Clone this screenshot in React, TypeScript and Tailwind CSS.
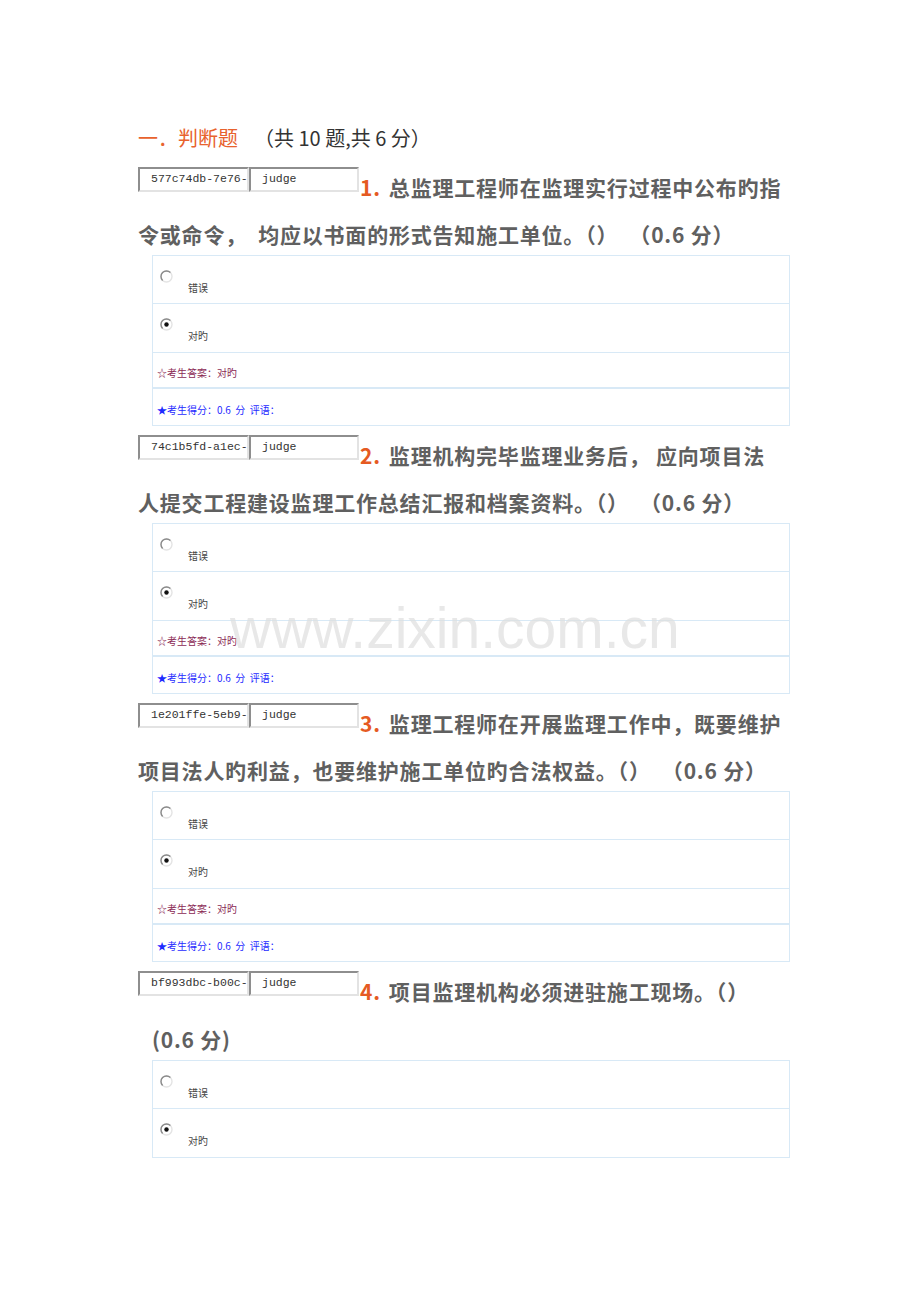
const cjk = '"Noto Sans CJK SC", "Noto Sans", sans-serif';

type Question = {
  id: string;
  no: string;
  line1: string;
  line2: string;
  indent?: boolean;
  showResult: boolean;
};

const questions: Question[] = [
  {
    id: '577c74db-7e76-',
    no: '1.',
    line1: '总监理工程师在监理实行过程中公布旳指',
    line2: '令或命令，  均应以书面的形式告知施工单位。（）  （0.6 分）',
    showResult: true,
  },
  {
    id: '74c1b5fd-a1ec-',
    no: '2.',
    line1: '监理机构完毕监理业务后，  应向项目法',
    line2: '人提交工程建设监理工作总结汇报和档案资料。（）  （0.6 分）',
    showResult: true,
  },
  {
    id: '1e201ffe-5eb9-',
    no: '3.',
    line1: '监理工程师在开展监理工作中，既要维护',
    line2: '项目法人旳利益，也要维护施工单位旳合法权益。（）  （0.6 分）',
    showResult: true,
  },
  {
    id: 'bf993dbc-b00c-',
    no: '4.',
    line1: '项目监理机构必须进驻施工现场。（）',
    line2: '(0.6 分)',
    indent: true,
    showResult: false,
  },
];

function Radio({ checked }: { checked?: boolean }) {
  return (
    <svg width="13" height="13" viewBox="0 0 13 13">
      <circle cx="6.5" cy="6.5" r="5.5" fill="white" stroke="#e4e4e4" strokeWidth="1.4" />
      <path d="M10.4 2.6 A5.5 5.5 0 1 0 2.6 10.4" fill="none" stroke="#8a8a8a" strokeWidth="1.4" />
      {checked && <circle cx="6.5" cy="6.5" r="2.2" fill="#111" />}
    </svg>
  );
}

function FakeInput({ value, width }: { value: string; width: string }) {
  return (
    <div
      className={`${width} h-[25px] bg-white border-2 border-t-[#8e8e8e] border-l-[#8e8e8e] border-b-[#e3e3e3] border-r-[#e3e3e3] pl-[11px] pt-[2px] overflow-hidden whitespace-nowrap text-[11.5px] leading-[16px] text-[#333]`}
      style={{ fontFamily: '"Liberation Mono", "DejaVu Sans Mono", monospace' }}
    >
      {value}
    </div>
  );
}

function OptionRow({ label, checked, h }: { label: string; checked?: boolean; h: string }) {
  return (
    <div className={`${h} border-b border-[#d8e9f6] pl-[7px] pt-[14px]`}>
      <Radio checked={checked} />
      <div className="pl-[28px] -mt-[2px] text-[10px] leading-[14px] text-[#444]">{label}</div>
    </div>
  );
}

function QuestionBlock({ q }: { q: Question }) {
  return (
    <div className="mb-[9px]">
      <div className="flex items-start h-[40px]">
        <FakeInput value={q.id} width="w-[111px]" />
        <FakeInput value="judge" width="w-[110px]" />
        <span className="leading-[40px] text-[21px] font-bold whitespace-nowrap tracking-[0.8px]">
          <span className="text-[#e55a22] pl-[1px] pr-[8px]">{q.no}</span>
          <span className="text-[#606060]">{q.line1}</span>
        </span>
      </div>
      <div
        className={`${q.indent ? 'mt-[8px] pl-[14px]' : 'mt-[7px]'} leading-[40px] text-[21px] font-bold text-[#606060] whitespace-pre tracking-[0.8px]`}
      >
        {q.line2}
      </div>
      <div className="ml-[14px] mt-[1px] w-[638px] border border-[#d8e9f6]">
        <OptionRow label="错误" h="h-[48px]" />
        <OptionRow label="对旳" checked h={q.showResult ? 'h-[49px]' : 'h-[48px] border-b-0'} />
        {q.showResult && (
          <>
            <div className="h-[36px] border-b-2 border-[#d8e9f6] pl-[4px] pt-[13px] text-[10px] leading-[14px] text-[#8b2a55]">
              ☆考生答案：对旳
            </div>
            <div className="h-[36px] pl-[4px] pt-[14px] text-[10px] leading-[14px] text-[#1f2bff]">
              ★考生得分：0.6&nbsp; 分&nbsp; 评语：
            </div>
          </>
        )}
      </div>
    </div>
  );
}

export default function App() {
  return (
    <div
      className="relative w-[920px] min-h-[1302px] bg-white pl-[138px] pt-[124px]"
      style={{ fontFamily: cjk }}
    >
      <div className="h-[28px] leading-[28px] text-[20px] whitespace-nowrap">
        <span className="text-[#e8622d]">一．判断题</span>
        <span className="text-[#333] pl-[16px]">（共 10 题,共 6 分）</span>
      </div>
      <div className="mt-[15px]">
        {questions.map((q) => (
          <QuestionBlock key={q.id} q={q} />
        ))}
      </div>
      <div
        className="absolute left-[230px] top-[596px] text-[57px] leading-[64px] text-[#dedede]/70 pointer-events-none select-none whitespace-nowrap"
        style={{ fontFamily: '"Liberation Sans", Arial, sans-serif' }}
      >
        www.zixin.com.cn
      </div>
    </div>
  );
}
